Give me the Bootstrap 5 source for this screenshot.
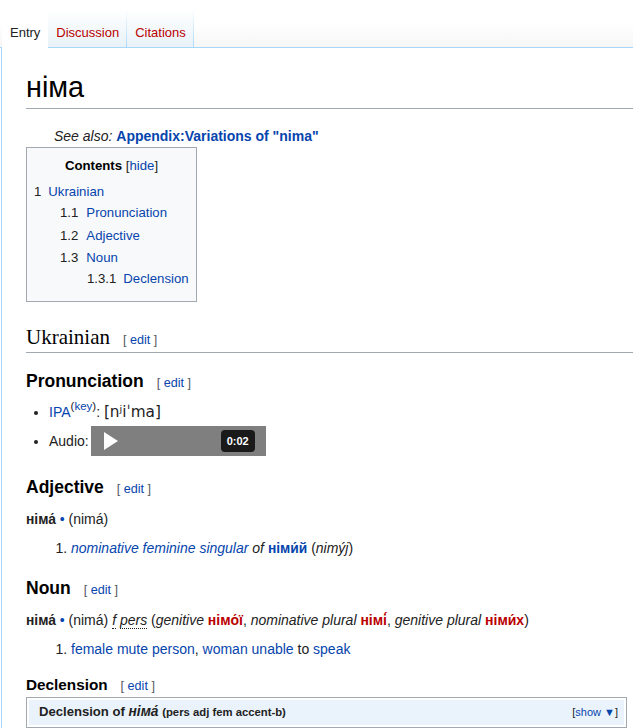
<!DOCTYPE html>
<html lang="en">
  <head>
    <meta charset="UTF-8" />
    <meta name="viewport" content="width=device-width, initial-scale=1.0" />
    <title>німа - Wiktionary</title>
    <link
      href="https://cdn.jsdelivr.net/npm/bootstrap@5.3.0/dist/css/bootstrap.min.css"
      rel="stylesheet"
    />
    <style>
      html, body {
        height: 728px;
        overflow: hidden;
      }

      body {
        font-family: "Liberation Sans", Arial, sans-serif;
        font-size: 14px;
        line-height: 22px;
        color: #222;
        background: #fff;
      }

      a {
        color: #0645ad;
        text-decoration: none;
      }

      .wk-top {
        height: 48px;
        padding-left: 2px;
        background: linear-gradient(#fff 50%, #f6f6f6);
        border-bottom: 1px solid #a7d7f9;
      }

      .wk-tab {
        height: 47px;
        padding: 24px 7px 0 8px;
        font-size: 13px;
        line-height: 17px;
        background: linear-gradient(#fff 20%, #e8f2f8);
        border-right: 1px solid;
        border-image: linear-gradient(#fff 20%, #a7d7f9) 1;
      }

      .wk-tab a {
        color: #ba0000;
      }

      .wk-tab.wk-on {
        height: 48px;
        padding-right: 8px;
        background: #fff;
        color: #222;
        border-right: 0;
      }

      .wk-body {
        height: 680px;
        margin-left: 1px;
        padding-left: 24px;
        border-left: 1px solid #a7d7f9;
      }

      .wk-title {
        height: 61px;
        margin: 0;
        padding-top: 21px;
        font-family: "Liberation Sans", sans-serif;
        font-size: 28.8px;
        line-height: 36px;
        color: #000;
        border-bottom: 1px solid #a2a9b1;
      }

      .wk-also {
        height: 38px;
        padding: 16px 0 0 28px;
      }

      .wk-also b {
        color: #0645ad;
      }

      .wk-toc {
        width: 171px;
        height: 155px;
        padding: 8px 7px 0;
        font-size: 13.2px;
        line-height: 20px;
        color: #222;
        background: #f8f9fa;
        border: 1px solid #a2a9b1;
      }

      .wk-toc-head {
        margin-bottom: 6px;
        text-align: center;
      }

      .wk-toc-head b {
        color: #000;
      }

      .wk-toc-row {
        display: flex;
        gap: 7px;
        height: 22px;
      }

      .wk-toc-row:nth-child(2),
      .wk-toc-row:nth-child(5) {
        height: 21px;
      }

      .wk-toc-row:nth-child(3) {
        height: 23px;
      }

      .wk-l2 {
        gap: 8px;
        padding-left: 26px;
      }

      .wk-l3 {
        padding-left: 53px;
      }

      .wk-edit {
        margin-left: 13px;
        font-family: "Liberation Sans", sans-serif;
        font-size: 12.6px;
        font-weight: 400;
        line-height: 1;
        color: #54595d;
      }

      .wk-h2 {
        height: 30px;
        margin: 21px 0 0;
        font-family: "Liberation Serif", serif;
        font-size: 21px;
        font-weight: 400;
        line-height: 28px;
        color: #000;
        border-bottom: 1px solid #a2a9b1;
      }

      .wk-h3 {
        margin: 0;
        font-family: "Liberation Sans", sans-serif;
        font-size: 17.5px;
        font-weight: 700;
        line-height: 24px;
        color: #000;
      }

      .wk-h4 {
        margin: -2px 0 1px;
        font-family: "Liberation Sans", sans-serif;
        font-size: 15.3px;
        font-weight: 700;
        line-height: 22px;
        color: #000;
      }

      .wk-bullets {
        padding-left: 23px;
        margin: 8px 0 19px;
      }

      .wk-bullets sup {
        font-size: 11.5px;
        top: -7px;
      }

      .wk-ipa {
        font-family: "DejaVu Sans", sans-serif;
        font-size: 15.3px;
      }

      .wk-audio-row {
        height: 30px;
        margin-top: 3px;
        line-height: 30px;
      }

      .wk-player {
        width: 175px;
        height: 30px;
        margin-left: 2px;
        padding: 0 11px 0 13px;
        background: #7f7f7f;
      }

      .wk-time {
        padding: 0 6px;
        font-size: 11px;
        font-weight: 700;
        line-height: 22px;
        color: #fff;
        background: #1a1a1a;
        border-radius: 4px;
      }

      .wk-head {
        font-size: 13.8px;
        font-weight: 700;
      }

      .wk-dot {
        color: #0645ad;
      }

      .wk-red {
        font-size: 14px;
        font-weight: 700;
        color: #ba0000;
      }

      .wk-blue {
        font-size: 13.8px;
        font-weight: 700;
        color: #0645ad;
      }

      .wk-line {
        margin: 9px 0 0;
      }

      .wk-ol {
        padding-left: 45px;
        margin: 6px 0 16px;
      }

      .wk-abbr {
        border-bottom: 1px dotted #222;
      }

      .wk-nav {
        height: 31px;
        margin-right: 6px;
        padding: 2px;
        border: 1px solid #a2a9b1;
      }

      .wk-nav-in {
        height: 25px;
        padding: 0 6px 0 10px;
        font-size: 13.1px;
        font-weight: 700;
        line-height: 24px;
        color: #222;
        background: #eaf3fc;
      }

      .wk-nav-in i {
        font-size: 13.8px;
      }

      .wk-nav-in small {
        font-size: 11.3px;
      }

      .wk-show {
        font-size: 11px;
        font-weight: 400;
      }
    </style>
  </head>
  <body>
    <div class="wk-top d-flex">
      <div class="wk-tab wk-on">Entry</div>
      <div class="wk-tab"><a href="#">Discussion</a></div>
      <div class="wk-tab"><a href="#">Citations</a></div>
    </div>

    <div class="wk-body">
      <h1 class="wk-title">німа</h1>
      <div class="wk-also">
        <i>See also:</i> <a href="#"><b>Appendix:Variations of "nima"</b></a>
      </div>

      <div class="wk-toc">
        <div class="wk-toc-head"><b>Contents</b> [<a href="#">hide</a>]</div>
        <div class="wk-toc-row"><span>1</span><a href="#">Ukrainian</a></div>
        <div class="wk-toc-row wk-l2"><span>1.1</span><a href="#">Pronunciation</a></div>
        <div class="wk-toc-row wk-l2"><span>1.2</span><a href="#">Adjective</a></div>
        <div class="wk-toc-row wk-l2"><span>1.3</span><a href="#">Noun</a></div>
        <div class="wk-toc-row wk-l3"><span>1.3.1</span><a href="#">Declension</a></div>
      </div>

      <h2 class="wk-h2">Ukrainian<span class="wk-edit">[ <a href="#">edit</a> ]</span></h2>

      <h3 class="wk-h3 mt-3">Pronunciation<span class="wk-edit">[ <a href="#">edit</a> ]</span></h3>
      <ul class="wk-bullets">
        <li><a href="#">IPA</a><sup>(<a href="#">key</a>)</sup>: <span class="wk-ipa">[nʲiˈma]</span></li>
        <li class="wk-audio-row">
          <div class="d-inline-flex align-items-center align-top">
            <span>Audio:</span>
            <div class="wk-player d-flex align-items-center justify-content-between">
              <svg width="14" height="18" viewBox="0 0 14 18"><polygon points="0,0 14,9 0,18" fill="#fff" /></svg>
              <span class="wk-time">0:02</span>
            </div>
          </div>
        </li>
      </ul>

      <h3 class="wk-h3">Adjective<span class="wk-edit">[ <a href="#">edit</a> ]</span></h3>
      <p class="wk-line"><span class="wk-head">німа́</span> <span class="wk-dot">•</span> (nimá)</p>
      <ol class="wk-ol">
        <li><i><a href="#">nominative feminine singular</a> of</i> <a href="#" class="wk-blue">німи́й</a> (<i>nimýj</i>)</li>
      </ol>

      <h3 class="wk-h3">Noun<span class="wk-edit">[ <a href="#">edit</a> ]</span></h3>
      <p class="wk-line"><span class="wk-head">німа́</span> <span class="wk-dot">•</span> (nimá) <i><span class="wk-abbr">f</span> <span class="wk-abbr">pers</span></i> (<i>genitive</i> <a href="#" class="wk-red">німо́ї</a>, <i>nominative plural</i> <a href="#" class="wk-red">німі́</a>, <i>genitive plural</i> <a href="#" class="wk-red">німи́х</a>)</p>
      <ol class="wk-ol">
        <li><a href="#">female</a> <a href="#">mute</a> <a href="#">person</a>, <a href="#">woman</a> <a href="#">unable</a> to <a href="#">speak</a></li>
      </ol>

      <h4 class="wk-h4">Declension<span class="wk-edit">[ <a href="#">edit</a> ]</span></h4>
      <div class="wk-nav">
        <div class="wk-nav-in d-flex justify-content-between">
          <span>Declension of <i>німа́</i> <small>(pers adj fem accent-b)</small></span>
          <span class="wk-show">[<a href="#">show ▼</a>]</span>
        </div>
      </div>
    </div>

    <script src="https://cdn.jsdelivr.net/npm/bootstrap@5.3.0/dist/js/bootstrap.bundle.min.js"></script>
  </body>
</html>
